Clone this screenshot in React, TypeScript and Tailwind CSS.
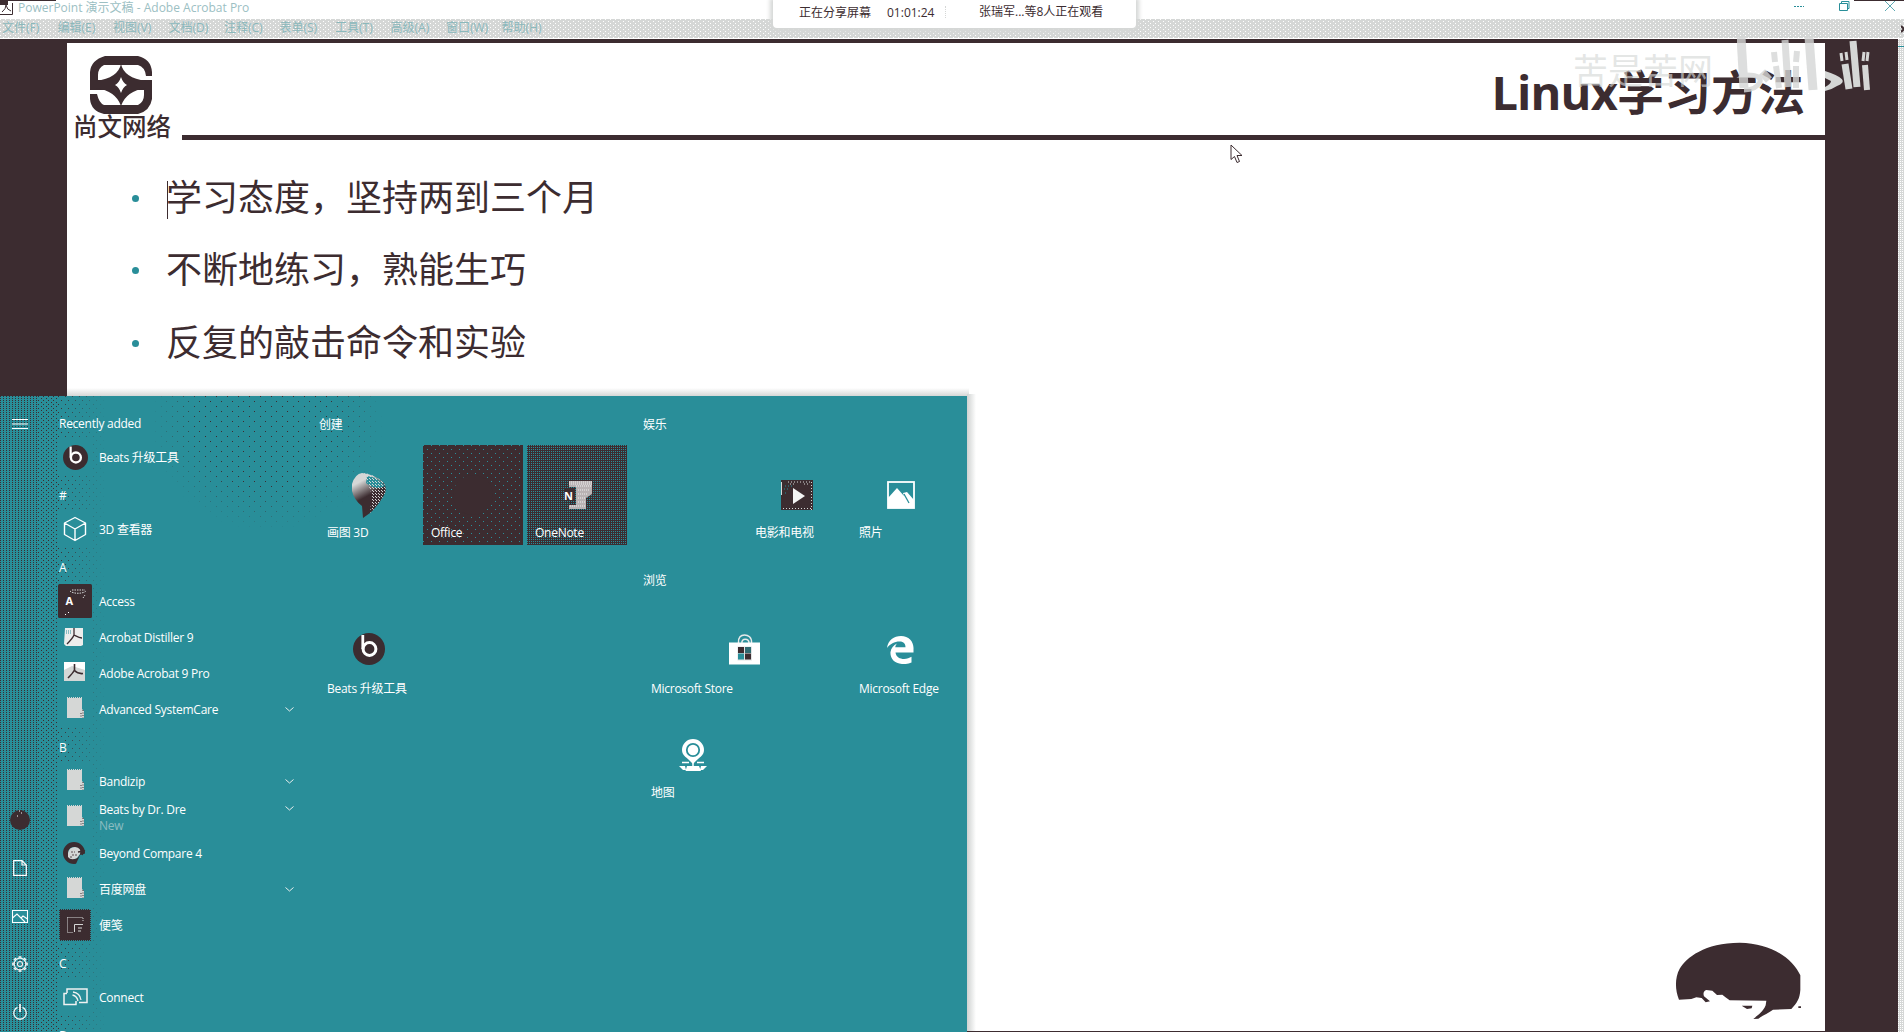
import React from "react";

const INK = "#3c2c30";
const TEAL = "#298e99";
const MIST = "#d5d7d6";

const menuItems = ["文件(F)", "编辑(E)", "视图(V)", "文档(D)", "注释(C)", "表单(S)", "工具(T)", "高级(A)", "窗口(W)", "帮助(H)"];

function CompanyLogo() {
  return (
    <svg width="62" height="58" viewBox="0 0 62 58" className="ml-[6px]">
      <path
        fill={INK}
        d="M15 0H48Q61 3 62 16V20H56Q55 11 48 9H14Q8 12 8 19V24H62V43Q60 55 48 58H14Q1 55 0 43V38H7Q9 47 14 49H48Q54 46 54 39V34H0V16Q1 4 15 0Z"
      />
      <path fill={INK} d="M31 8Q34 22 56 25V32Q36 35 31 50Q26 35 6 32V25Q28 22 31 8Z" />
      <path fill="#fff" d="M31 21Q33 27 37 29Q33 31 31 37Q29 31 25 29Q29 27 31 21Z" />
    </svg>
  );
}

function BeatsIcon({ size }: { size: number }) {
  return (
    <svg width={size} height={size} viewBox="0 0 32 32">
      <circle cx="16" cy="16" r="16" fill={INK} />
      <circle cx="16.5" cy="16" r="6.4" fill="none" stroke="#fff" strokeWidth="3" />
      <path d="M9.8 2V16" stroke="#fff" strokeWidth="2.8" />
    </svg>
  );
}

function CubeIcon() {
  return (
    <svg width="24" height="26" viewBox="0 0 24 26" fill="none" stroke="#fff" strokeWidth="1.4" strokeLinejoin="round">
      <path d="M12 1.5L22.5 7V18.5L12 24.5L1.5 18.5V7ZM1.5 7L12 13L22.5 7M12 13V24.5" />
    </svg>
  );
}

function AccessIcon() {
  return (
    <svg width="34" height="34" viewBox="0 0 34 34">
      <rect width="34" height="34" rx="1.5" fill={INK} />
      <path d="M12 7C15 10 25 10 28 7M14 6H27M25 14l2-3" stroke={MIST} strokeWidth="1" strokeDasharray="1.5 1" fill="none" />
      <text x="7.5" y="21" fontSize="11" fontWeight="700" fill="#fff" fontFamily="Open Sans">A</text>
      <path d="M7 31l1-1M10 29l1-1" stroke="#fff" />
    </svg>
  );
}

function DistillerIcon() {
  return (
    <svg width="20" height="20" viewBox="0 0 20 20" className="-ml-[3px]">
      <path d="M1 1H19V18L17 19H2L0 17Z" fill="#ecedec" />
      <path d="M2 4H8M2 6H7" stroke={TEAL} strokeDasharray="1 1" />
      <path d="M10 1V8C9 11 6 14 3 17M10 8C12 9 15 11 18 11" stroke={INK} strokeWidth="1.3" fill="none" />
    </svg>
  );
}

function AcrobatIcon() {
  return (
    <svg width="21" height="19" viewBox="0 0 21 19" className="-mt-1 -ml-[1px]">
      <rect width="21" height="19" fill="#fff" />
      <path d="M0 8L8 4L21 8V19H0Z" fill={MIST} />
      <path d="M10.500 2V8C9 11 7 13 4 16M10.500 8.500C12 10 15 12 19 11.500" stroke={INK} strokeWidth="1.6" fill="none" />
    </svg>
  );
}

function FolderIcon() {
  return (
    <svg width="17" height="22" viewBox="0 0 17 22" className="-mt-[2px] ml-[1px]">
      <path d="M0 1H15V12L17 14V21H0Z" fill={MIST} />
      <path d="M0 .5H15" stroke={MIST} strokeDasharray="1 1" />
      <path d="M14 16V21M16 13V21" stroke={INK} strokeDasharray="1 1.500" />
    </svg>
  );
}

function BeyondIcon() {
  return (
    <svg width="24" height="22" viewBox="0 0 24 22" className="-ml-[1px]">
      <circle cx="11" cy="11" r="8.500" fill="none" stroke={INK} strokeWidth="5" />
      <path d="M17 13L24 11V22H13Z" fill={TEAL} />
      <path d="M5 11Q6 5 12 5Q19 6 17 12L14 16Q8 19 5 15Z" fill={MIST} />
      <path d="M8 10h4M9 13h5M7 15h3" stroke={INK} strokeWidth=".8" strokeDasharray="2 1" />
      <path d="M15 10l6-1-2 4" stroke={INK} strokeWidth="1.500" fill="none" />
    </svg>
  );
}

function NotesIcon() {
  return (
    <svg width="32" height="32" viewBox="0 0 32 32">
      <rect width="32" height="32" fill={INK} />
      <path d="M.5 0V32M31.500 0V32M0 .5H32M0 31.500H32" stroke={TEAL} strokeDasharray="1 1" />
      <path d="M8.500 8.500H24V12M8.500 8.500V23.500H14" stroke={MIST} strokeDasharray="1 1" fill="none" />
      <path d="M15.500 23V15.500H24M19 19H23M19 22H22" stroke={MIST} fill="none" />
    </svg>
  );
}

function ConnectIcon() {
  return (
    <svg width="25" height="18" viewBox="0 0 25 18" fill="none" stroke="#f0f2f2" strokeWidth="1.500">
      <path d="M4 5V1H24V14.500H16M4 5.500H1V16.500H13V13" />
      <path d="M9.500 7Q14 8 15 13M10 4Q17 5 18 12" strokeWidth="1.300" />
    </svg>
  );
}

function Chevron() {
  return (
    <svg width="9" height="5" viewBox="0 0 9 5" fill="none" stroke="#e8eeee">
      <path d="M.5 .5L4.500 4L8.500 .5" />
    </svg>
  );
}

type Entry = {
  label: string;
  heading?: boolean;
  icon?: React.ReactNode;
  expandable?: boolean;
  note?: string;
};

const entries: Entry[] = [
  { label: "Recently added", heading: true },
  { label: "Beats 升级工具", icon: <BeatsIcon size={25} /> },
  { label: "#", heading: true },
  { label: "3D 查看器", icon: <CubeIcon /> },
  { label: "A", heading: true },
  { label: "Access", icon: <AccessIcon /> },
  { label: "Acrobat Distiller 9", icon: <DistillerIcon /> },
  { label: "Adobe Acrobat 9 Pro", icon: <AcrobatIcon /> },
  { label: "Advanced SystemCare", icon: <FolderIcon />, expandable: true },
  { label: "B", heading: true },
  { label: "Bandizip", icon: <FolderIcon />, expandable: true },
  { label: "Beats by Dr. Dre", icon: <FolderIcon />, expandable: true, note: "New" },
  { label: "Beyond Compare 4", icon: <BeyondIcon /> },
  { label: "百度网盘", icon: <FolderIcon />, expandable: true },
  { label: "便笺", icon: <NotesIcon /> },
  { label: "C", heading: true },
  { label: "Connect", icon: <ConnectIcon /> },
  { label: "D", heading: true },
];

function EntryRow({ entry }: { entry: Entry }) {
  if (entry.heading) {
    return <div className="flex h-9 shrink-0 items-center pt-1.5 pl-[19px]">{entry.label}</div>;
  }
  return (
    <div className="flex h-9 shrink-0 items-center pl-[18px]">
      <div className="flex size-[34px] items-center justify-center bg-[#298e99]">{entry.icon}</div>
      <div className={entry.note ? "ml-[7px] w-[186px] pt-0.5 leading-4" : "ml-[7px] w-[186px] pt-px leading-4"}>
        <div>{entry.label}</div>
        {entry.note && <div className="text-[#8bbdc1]">{entry.note}</div>}
      </div>
      {entry.expandable && (
        <div className={entry.note ? "mb-[18px]" : ""}>
          <Chevron />
        </div>
      )}
    </div>
  );
}

function RailButton({ children }: { children: React.ReactNode }) {
  return <div className="flex h-12 w-10 shrink-0 items-center justify-center">{children}</div>;
}

function Rail() {
  const gearTeeth = Array.from({ length: 8 }, (_, i) => i * 45);
  return (
    <div className="relative flex w-10 shrink-0 flex-col pt-1">
      <RailButton>
        <svg width="16" height="10" viewBox="0 0 16 10" stroke="#fff" strokeWidth="1.100">
          <path d="M0 .5H16M0 5H16M0 9.500H16" />
        </svg>
      </RailButton>
      <div className="h-[348px] shrink-0" />
      <RailButton>
        <svg width="20" height="20" viewBox="0 0 20 20">
          <circle cx="10" cy="10" r="10" fill={INK} />
          <path d="M9 1h1M11 3h1M7 6h1" stroke="#fff" />
        </svg>
      </RailButton>
      <RailButton>
        <svg width="14" height="16" viewBox="0 0 14 16" fill="none" stroke="#fff" strokeWidth="1.200" className="-ml-px">
          <path d="M.7 .7H9L13.300 5V15.300H.7ZM9 .7V5H13.300" />
        </svg>
      </RailButton>
      <RailButton>
        <svg width="16" height="13" viewBox="0 0 16 13" fill={TEAL} stroke="#fff" strokeWidth="1.100">
          <path d="M.5 .5H15.500V12.500H.5Z" />
          <path d="M.5 8L5 4L13 12M9 8L11 6L15.500 9" fill="none" />
        </svg>
      </RailButton>
      <RailButton>
        <svg width="16" height="16" viewBox="0 0 16 16" fill="none" stroke="#eef2f2">
          <circle cx="8" cy="8" r="5.800" strokeWidth="1.200" />
          {gearTeeth.map((angle) => (
            <path key={angle} d="M6.500 1H9.500" transform={`rotate(${angle} 8 8)`} strokeWidth="1.700" />
          ))}
          <circle cx="8" cy="8" r="2.500" strokeWidth="1.200" />
        </svg>
      </RailButton>
      <RailButton>
        <svg width="14" height="16" viewBox="0 0 14 16" fill="none" stroke="#f0f4f4" strokeWidth="1.300">
          <path d="M4.500 3.400A6.200 6.200 0 1 0 9.500 3.400" />
          <path d="M7 0V8" strokeWidth="1.800" />
        </svg>
      </RailButton>
    </div>
  );
}

function Paint3DIcon() {
  return (
    <svg width="34" height="45" viewBox="0 0 34 45">
      <defs>
        <linearGradient id="drop" x1="0" y1="0" x2=".4" y2="1">
          <stop offset="0" stopColor="#d5d7d6" />
          <stop offset=".25" stopColor="#d5d7d6" />
          <stop offset=".6" stopColor="#3c2c30" />
          <stop offset="1" stopColor="#3c2c30" />
        </linearGradient>
        <pattern id="grain" width="3" height="3" patternUnits="userSpaceOnUse">
          <path d="M0 .5h1M2 2.500h1" stroke={MIST} />
        </pattern>
      </defs>
      <path d="M10 0Q22 1 32 10Q36 17 31 24Q25 34 18 40L11 45L10 33Q2 27 0 18V11Q3 1 10 0Z" fill="url(#drop)" />
      <path d="M15 3Q26 4 33 13Q24 18 14 10Z" fill={TEAL} />
      <path d="M12 0Q22 1 32 10Q36 17 31 24Q25 34 18 40L20 22Z" fill="url(#grain)" />
    </svg>
  );
}

function OneNoteIcon() {
  return (
    <svg width="28" height="29" viewBox="0 0 28 29" className="ml-[2px]">
      <path d="M5 0H28V13L22 17V28H5V24H12V6H5Z" fill="#b9b3b4" />
      <path d="M5 1H28M5 3H28M12 5H28M14 9H26M14 13H24M14 17H22M14 21H22M6 25H22" stroke="#f0f0f0" strokeDasharray="1 1" />
      <path d="M0 8H11V20H0Z" fill={INK} />
      <text x="0" y="18.500" fontSize="11" fontWeight="700" fill="#fff" fontFamily="Open Sans">N</text>
    </svg>
  );
}

function MoviesIcon() {
  return (
    <svg width="34" height="32" viewBox="0 0 34 32">
      <rect x="1" y="1" width="32" height="30" fill={INK} />
      <path d="M1.500 3V16" stroke={MIST} />
      <path d="M31.500 3V31M3 29.500H32M8 3H30M10 5H14M24 5H28" stroke={MIST} strokeDasharray="1 2" />
      <path d="M5 7H14M4 10H10M5 14H8" stroke={TEAL} strokeDasharray="1 2" />
      <path d="M13 9L25 17L13 25Z" fill="#f4f4f4" />
    </svg>
  );
}

function PhotosIcon() {
  return (
    <svg width="28" height="28" viewBox="0 0 28 28">
      <rect x="1" y="1" width="26" height="26" fill="none" stroke="#fff" strokeWidth="1.800" />
      <path d="M1 17L10 7L17 15L16 12L20 11L27 19V27H1Z" fill="#fff" />
      <path d="M17 13L22 22" stroke={TEAL} strokeWidth="1.300" />
    </svg>
  );
}

function StoreIcon() {
  return (
    <svg width="31" height="31" viewBox="0 0 31 31" className="-mt-1 -ml-px">
      <path d="M9.500 9C9 3 12 1 15.500 1S23 3 22.500 9M13 9C12 4 20 4 20 9" fill="none" stroke="#e8eaea" strokeWidth="1.500" />
      <rect y="8.500" width="31" height="22" fill="#fff" />
      <rect x="8.500" y="12.500" width="14.500" height="14" fill="#e2e4e4" />
      <rect x="9" y="13" width="6" height="6" fill={INK} />
      <rect x="9" y="19.500" width="6" height="6" fill={TEAL} />
      <rect x="16" y="13" width="6" height="6" fill="#2f6970" />
      <rect x="16" y="19.500" width="6" height="6" fill={INK} />
    </svg>
  );
}

function EdgeIcon() {
  return (
    <svg width="27" height="28" viewBox="0 0 27 28" className="-mt-[2px] -ml-px">
      <path
        fill="#fff"
        d="M0 12C1 4 7 0 14 0C22 0 27 6 26.500 13V16.500H8.500C9 21 13 23 17 23C20 23 22.500 22 24.500 20.800V26.500C21.500 27.800 18.500 28.300 15 28C7 27.500 3 22 3.500 16C4 12 6.500 9.500 10 7.500C8.800 9 8.400 10 8.300 11.300H18.500C18.500 8 17 5.500 12.500 5.500C7.500 5.500 3 8 0 12Z"
      />
    </svg>
  );
}

function MapsIcon() {
  return (
    <svg width="28" height="33" viewBox="0 0 28 33">
      <path d="M14 25C8 18 3 17 3 11A11 11 0 0 1 25 11C25 17 20 18 14 25Z" fill="#fff" />
      <circle cx="14" cy="11" r="6.200" fill="none" stroke={TEAL} strokeWidth="1.800" />
      <path d="M3 23.500H10M18 23.500H25M14 22V28" stroke="#fff" strokeWidth="1.500" />
      <path d="M0 27H6L7 31H4ZM8 27H20L22 32H6.500ZM22 27H28L24 31H21Z" fill="#fff" />
    </svg>
  );
}

function Tile({ label, className = "", children }: { label: string; className?: string; children: React.ReactNode }) {
  return (
    <div className={`relative flex h-[100px] items-center justify-center ${className}`}>
      {children}
      <div className="absolute bottom-1 left-2 leading-4 whitespace-nowrap">{label}</div>
    </div>
  );
}

function GroupTitle({ children }: { children: React.ReactNode }) {
  return <div className="flex h-[49px] items-end pb-[12px] leading-4">{children}</div>;
}

function StartMenu() {
  return (
    <div className="absolute top-[396px] left-0 flex h-[636px] w-[967px] overflow-hidden bg-[#298e99] font-['Open_Sans','Noto_Sans_CJK_SC',sans-serif] text-[12px] tracking-[-0.022em] text-white">
      <div className="pointer-events-none absolute inset-y-0 left-0 w-[38px] bg-[conic-gradient(at_1px_1px,transparent_75%,#3c2c30_0)] bg-[length:3px_2px]" />
      <div className="pointer-events-none absolute inset-y-0 left-[38px] w-[20px] bg-[conic-gradient(at_1px_1px,transparent_75%,#3c2c30_0),conic-gradient(at_1px_1px,transparent_75%,#3c2c30_0)] bg-[length:5px_4px] bg-[position:0_0,3px_2px]" />
      <div className="pointer-events-none absolute inset-y-0 left-[58px] w-[48px] bg-[conic-gradient(at_1px_1px,transparent_75%,#3c2c30_0),conic-gradient(at_1px_1px,transparent_75%,#3c2c30_0)] bg-[length:7px_8px] bg-[position:0_0,3px_4px] [mask-image:linear-gradient(90deg,#000,transparent)]" />
      <div className="pointer-events-none absolute top-0 left-[150px] h-[136px] w-[234px] bg-[conic-gradient(at_1px_1px,transparent_75%,#3c2c30_0),conic-gradient(at_1px_1px,transparent_75%,#3c2c30_0)] bg-[length:11px_10px] bg-[position:0_0,5px_5px] [mask-image:radial-gradient(ellipse_at_50%_20%,#000_40%,transparent_70%)]" />
      <Rail />
      <div className="relative flex w-[279px] shrink-0 flex-col overflow-hidden pt-[7px]">
        {entries.map((entry) => (
          <EntryRow key={entry.label} entry={entry} />
        ))}
      </div>
      <div className="relative flex gap-4">
        <div className="w-[308px]">
          <GroupTitle>创建</GroupTitle>
          <div className="grid grid-cols-3 gap-x-1 gap-y-[56px]">
            <Tile label="画图 3D">
              <Paint3DIcon />
            </Tile>
            <Tile
              label="Office"
              className="bg-[#3c2c30] bg-[conic-gradient(at_1px_1px,transparent_75%,#298e99_0),conic-gradient(at_1px_1px,transparent_75%,#298e99_0)] bg-[length:8px_8px] bg-[position:0_0,4px_4px]"
            >
              <div className="size-10 rounded-full bg-[#3c2c30]" />
            </Tile>
            <Tile label="OneNote" className="bg-[#3c2c30] bg-[conic-gradient(at_1px_1px,transparent_75%,#298e99_0)] bg-[length:2px_2px]">
              <OneNoteIcon />
            </Tile>
            <Tile label="Beats 升级工具" className="*:first:mb-1">
              <BeatsIcon size={32} />
            </Tile>
          </div>
        </div>
        <div className="w-[308px]">
          <GroupTitle>娱乐</GroupTitle>
          <div className="grid grid-cols-3 gap-1">
            <Tile label="电影和电视" className="col-start-2">
              <MoviesIcon />
            </Tile>
            <Tile label="照片">
              <PhotosIcon />
            </Tile>
          </div>
          <div className="flex h-[56px] items-end pb-[12px] leading-4">浏览</div>
          <div className="grid grid-cols-3 gap-1">
            <Tile label="Microsoft Store" className="col-span-2">
              <StoreIcon />
            </Tile>
            <Tile label="Microsoft Edge">
              <EdgeIcon />
            </Tile>
            <Tile label="地图">
              <MapsIcon />
            </Tile>
          </div>
        </div>
      </div>
    </div>
  );
}

function MeetingBar() {
  return (
    <div className="absolute top-0 left-[773px] flex h-7 w-[363px] items-start rounded-b-sm bg-white pt-[5px] pl-[26px] font-['Open_Sans','Noto_Sans_CJK_SC',sans-serif] text-[12px] leading-4 whitespace-nowrap text-[#3c2c30] shadow-[0_1px_4px_3px_#d5d7d6]">
      <span className="w-[88px]">正在分享屏幕</span>
      <span className="w-[58px] text-[12px]">01:01:24</span>
      <span className="mt-px mr-[33px] h-3 border-l border-dotted border-[#d5d7d6]" />
      <span className="-mt-px">张瑞军...等8人正在观看</span>
    </div>
  );
}

function TitleBar() {
  return (
    <div className="flex h-[19px] justify-between bg-white">
      <div className="flex">
        <svg width="13" height="16" viewBox="0 0 13 16" fill="none">
          <path d="M0 4H8M0 2H8" stroke={INK} strokeWidth="2" />
          <path d="M0 14.500H12.500V3" stroke={INK} />
          <path d="M2 12Q6 9 6 5Q7 10 11 11" stroke={INK} />
        </svg>
        <span className="ml-[5px] font-['Open_Sans','Noto_Sans_CJK_SC',sans-serif] text-[12px] leading-4 text-[#9cc0c3]">
          PowerPoint 演示文稿 - Adobe Acrobat Pro
        </span>
      </div>
      <svg width="112" height="14" viewBox="0 0 112 14" fill="none" stroke={TEAL}>
        <path d="M2 6.500H12" strokeDasharray="2 1" />
        <path d="M47.500 3.500H55.500V10.500H47.500ZM49.500 3V1.500H57V8.500H56" />
        <path d="M93 1L103 11M103 1L93 11" strokeOpacity=".75" />
      </svg>
    </div>
  );
}

function BiliMark() {
  return (
    <svg width="136" height="60" viewBox="1737 35 136 60" className="absolute top-[35px] left-[1737px]" fill="none" stroke={MIST}>
      <g opacity=".8">
        <path d="M1741 37L1744 88" strokeWidth="9" />
        <path d="M1747 75Q1762 75 1760 82Q1756 90 1744 90" strokeWidth="5" />
        <path d="M1762 72L1769 80" strokeWidth="8" />
        <path d="M1774 52L1775 62M1776 66L1779 88M1797 51L1796 62M1796 66L1796 88" strokeWidth="6" />
        <path d="M1785 40L1788 87" strokeWidth="7" />
        <path d="M1809 37L1813 90" strokeWidth="9" />
      </g>
      <path d="M1825 71Q1853 80 1837 86Q1831 90 1825 91V87Q1831 84 1831 81L1825 78Z" fill={MIST} stroke="none" />
      <path d="M1841 53L1842 61M1846 52L1847 60M1863 61L1864 52M1867 61L1868 52" strokeWidth="3" />
      <path d="M1845 64L1849 89" strokeWidth="7" />
      <path d="M1853 41L1857 87" strokeWidth="7" />
      <path d="M1865 65L1867 90" strokeWidth="6" />
    </svg>
  );
}

function Hedgehog() {
  return (
    <svg width="132" height="80" viewBox="100 125 396 240" className="absolute right-[20px] bottom-[10px]">
      <path
        fill={INK}
        d="M118 301C106 272 105 235 120 208C140 175 195 130 300 130C400 132 460 180 482 228V272C480 300 472 310 455 329L400 331C385 342 372 346 356 358L341 359C355 347 370 338 378 318L380 304L270 303Q255 292 248 286L232 287L218 274L200 272Q188 276 193 291L211 306L198 309L186 296L170 294L155 299Z"
      />
      <path fill={INK} d="M306 319L338 319L336 327L322 329ZM476 321h8v5h-8Z" />
    </svg>
  );
}

const bullets = ["学习态度，坚持两到三个月", "不断地练习，熟能生巧", "反复的敲击命令和实验"];

function Slide() {
  return (
    <div className="relative h-full w-[1758px] bg-white font-['Open_Sans','Noto_Sans_CJK_SC',sans-serif] text-[#3c2c30]">
      <div className="flex h-[97px]">
        <div className="w-[115px] pt-[13px] pl-[6px]">
          <div className="pl-[11px]">
            <CompanyLogo />
          </div>
          <div className="-mt-px text-[24.500px] leading-[28px] font-medium whitespace-nowrap">尚文网络</div>
        </div>
        <div className="flex flex-1 items-start justify-end border-b-[5px] border-[#3c2c30] pt-[18px] pr-[20px] text-[47px] leading-[62px] font-bold whitespace-nowrap">
          <span className="tracking-[-0.018em]">Linux</span>学习方法
        </div>
      </div>
      <ul className="flex flex-col pt-[22px]">
        {bullets.map((text) => (
          <li key={text} className="flex h-[72.500px] items-center text-[36px] leading-[72px]">
            <span className="ml-[65px] size-[7px] rounded-full bg-[#298e99]" />
            <span className="-mt-px ml-[27px]">{text}</span>
          </li>
        ))}
      </ul>
      <span className="absolute top-[138px] left-[100px] h-[38px] w-px bg-[#3c2c30]" />
      <Hedgehog />
    </div>
  );
}

export default function App() {
  return (
    <div className="relative flex h-[1032px] w-[1904px] flex-col overflow-hidden bg-white">
      <TitleBar />
      <div className="flex h-[19px] items-center bg-[#d5d7d6] bg-[conic-gradient(at_1px_1px,transparent_75%,#fff_0),conic-gradient(at_1px_1px,transparent_75%,#fff_0)] bg-[length:5px_4px] bg-[position:0_0,3px_2px] pl-[2px] font-['Open_Sans','Noto_Sans_CJK_SC',sans-serif] text-[12px] leading-4 text-[#8bb8bb]">
        {menuItems.map((item) => (
          <span key={item} className="w-[55.500px] shrink-0 -translate-y-px whitespace-nowrap">
            {item}
          </span>
        ))}
        <svg width="3" height="8" viewBox="0 0 3 8" className="ml-auto">
          <path d="M0 1L3 4L0 7" stroke={INK} strokeWidth="2" fill="none" />
        </svg>
      </div>
      <div className="mt-px flex flex-1">
        <div className="flex w-[1898px] border-t-4 border-b border-[#3c2c30] bg-[#3c2c30] pl-[67px]">
          <Slide />
        </div>
        <div className="flex-1 bg-[#d5d7d6] bg-[conic-gradient(at_1px_1px,transparent_75%,#fff_0)] bg-[length:2px_2px]">
          <div className="mt-[7px] h-px bg-[#298e99]" />
        </div>
      </div>
      <span className="absolute top-0 left-0 h-px w-[56px] bg-[#3c2c30]" />
      <span className="absolute top-0 right-0 h-px w-[50px] bg-[#3c2c30]" />
      <MeetingBar />
      <span className="absolute top-[43px] left-[1573px] font-['Noto_Sans_CJK_SC',sans-serif] text-[35px] leading-[52px] text-[#d5d7d6]/65">苦是苦网</span>
      <BiliMark />
      <div className="absolute top-[388px] left-[67px] h-[8px] w-[902px] bg-linear-to-b from-white to-[#d5d7d6]" />
      <div className="absolute top-[394px] left-[967px] h-[637px] w-[9px] bg-linear-to-r from-[#cfd2d1] to-white" />
      <StartMenu />
      <svg width="13" height="20" viewBox="0 0 13 20" className="absolute top-[144px] left-[1230px]">
        <path d="M1 1V15.500L4.500 12.500L7 18.500L9.500 17.500L7 11.500H12Z" fill="#fff" stroke={INK} />
      </svg>
    </div>
  );
}
